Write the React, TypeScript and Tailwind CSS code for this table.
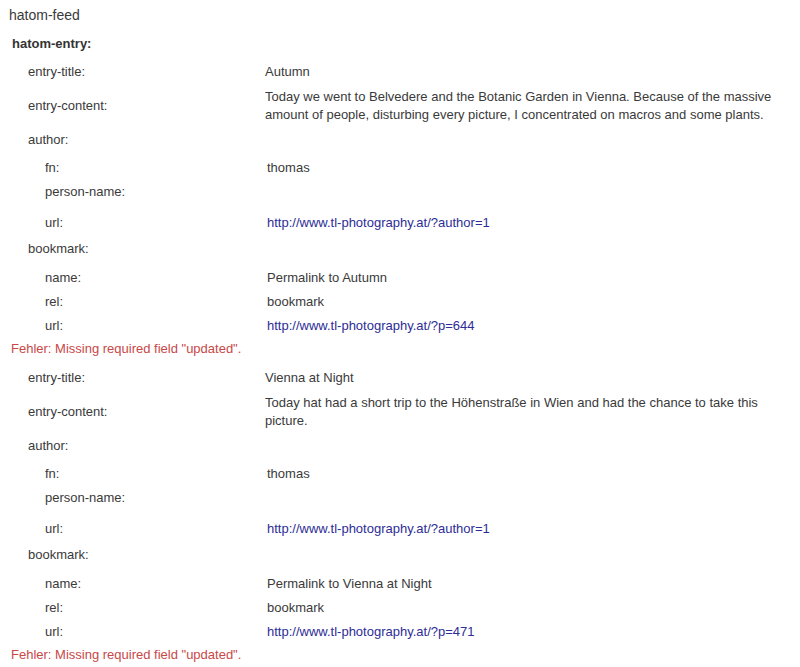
import React from "react";

type Row = {
  label: string;
  value?: string;
  link?: boolean;
  depth: 1 | 2;
  mt: string;
};

function Field({ r }: { r: Row }) {
  const labelCls =
    r.depth === 1 ? "pl-[28px] w-[265px] shrink-0" : "pl-[45px] w-[267px] shrink-0";
  return (
    <div className={`flex items-center ${r.mt}`}>
      <div className={labelCls}>{r.label}</div>
      <div className={`w-[520px] ${r.link ? "text-[#2d2d96]" : ""}`}>{r.value ?? ""}</div>
    </div>
  );
}

function Entry({
  title,
  content,
  authorUrl,
  name,
  url,
}: {
  title: string;
  content: string;
  authorUrl: string;
  name: string;
  url: string;
}) {
  const rows: Row[] = [
    { label: "entry-title:", value: title, depth: 1, mt: "mt-[10px]" },
    { label: "entry-content:", value: content, depth: 1, mt: "mt-[7px]" },
    { label: "author:", depth: 1, mt: "mt-[7px]" },
    { label: "fn:", value: "thomas", depth: 2, mt: "mt-[10px]" },
    { label: "person-name:", depth: 2, mt: "mt-[6px]" },
    { label: "url:", value: authorUrl, link: true, depth: 2, mt: "mt-[13px]" },
    { label: "bookmark:", depth: 1, mt: "mt-[8px]" },
    { label: "name:", value: name, depth: 2, mt: "mt-[11px]" },
    { label: "rel:", value: "bookmark", depth: 2, mt: "mt-[6px]" },
    { label: "url:", value: url, link: true, depth: 2, mt: "mt-[6px]" },
  ];
  return (
    <div className="flex flex-col">
      {rows.map((r, i) => (
        <Field key={i} r={r} />
      ))}
      <div className="mt-[5px] pl-[11px] text-[#c84848]">
        Fehler: Missing required field "updated".
      </div>
    </div>
  );
}

export default function App() {
  return (
    <div
      className="w-[800px] h-[667px] bg-white overflow-hidden text-[13px] leading-[18px] text-[#3a3a3a]"
      style={{ fontFamily: '"Liberation Sans", Arial, sans-serif' }}
    >
      <div className="pt-[6px] pl-[9px] text-[14px]">hatom-feed</div>
      <div className="mt-[11px] pl-[12px] font-bold text-[#333]">hatom-entry:</div>
      <Entry
        title="Autumn"
        content="Today we went to Belvedere and the Botanic Garden in Vienna. Because of the massive amount of people, disturbing every picture, I concentrated on macros and some plants."
        authorUrl="http://www.tl-photography.at/?author=1"
        name="Permalink to Autumn"
        url="http://www.tl-photography.at/?p=644"
      />
      <div className="mt-[1px]">
        <Entry
          title="Vienna at Night"
          content="Today hat had a short trip to the Höhenstraße in Wien and had the chance to take this picture."
          authorUrl="http://www.tl-photography.at/?author=1"
          name="Permalink to Vienna at Night"
          url="http://www.tl-photography.at/?p=471"
        />
      </div>
    </div>
  );
}
